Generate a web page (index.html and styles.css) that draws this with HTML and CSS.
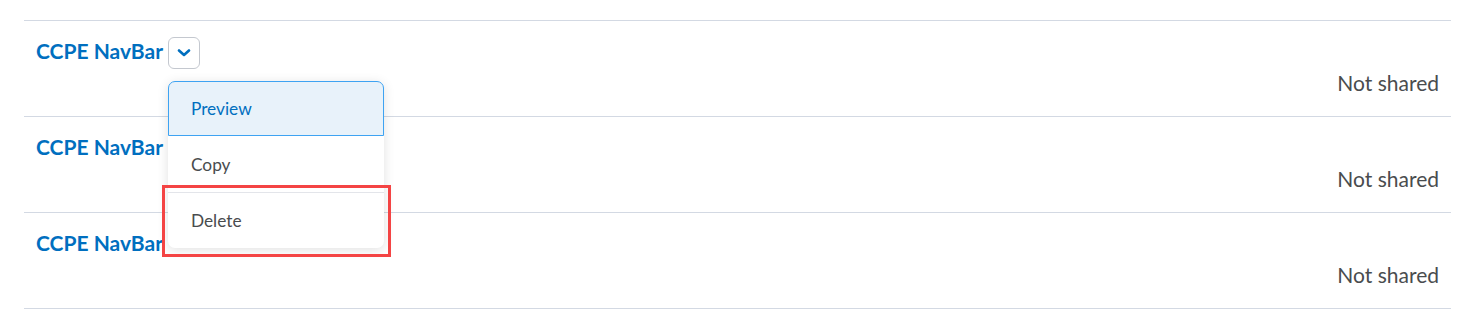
FILE: index.html
```html
<!DOCTYPE html>
<html lang="en">

<head>
    <meta charset="UTF-8">
    <meta name="viewport" content="width=device-width, initial-scale=1.0">
    <title>Widgets</title>
    <link rel="stylesheet" href="styles.css">
</head>

<body>
    <div class="list">
        <div class="row">
            <div class="row-head">
                <a class="title" href="#">CCPE NavBar</a>
                <div class="menu-wrap">
                    <button class="toggle" type="button">
                        <svg width="14" height="8" viewBox="0 0 14 8">
                            <path d="M2 1.5 L7 6 L12 1.5" fill="none" stroke="#006fbf" stroke-width="2.6" stroke-linecap="round" stroke-linejoin="round"/>
                        </svg>
                    </button>
                    <div class="menu">
                        <div class="menu-item active">Preview</div>
                        <div class="menu-item">Copy</div>
                        <div class="menu-item sep">Delete</div>
                        <div class="highlight"></div>
                    </div>
                </div>
            </div>
            <div class="status">Not shared</div>
        </div>
        <div class="row">
            <div class="row-head">
                <a class="title" href="#">CCPE NavBar</a>
            </div>
            <div class="status">Not shared</div>
        </div>
        <div class="row">
            <div class="row-head">
                <a class="title" href="#">CCPE NavBar</a>
            </div>
            <div class="status">Not shared</div>
        </div>
    </div>
</body>

</html>
```

FILE: styles.css
```css
body {
    margin: 0;
    padding: 20px 24px 0;
    background-color: #fff;
    font-family: Lato, 'Noto Sans', sans-serif;
    color: #494c4e;
}

.list {
    border-bottom: 1px solid #d3d9e3;
}

.row {
    border-top: 1px solid #d3d9e3;
    height: 96px;
    box-sizing: border-box;
    padding: 16px 12px 0;
}

.row-head {
    display: flex;
    align-items: center;
    height: 32px;
}

.title {
    font-size: 21px;
    font-weight: bold;
    color: #006fbf;
    text-decoration: none;
    margin-bottom: 6px;
}

.menu-wrap {
    position: relative;
    margin-left: 5px;
}

.toggle {
    display: flex;
    justify-content: center;
    align-items: center;
    width: 32px;
    height: 32px;
    padding: 0;
    border: 1px solid #c4c8cf;
    border-radius: 6px;
    background: #fff;
}

.status {
    text-align: right;
    font-size: 21px;
    line-height: 28px;
}

.menu {
    position: absolute;
    top: 44px;
    left: 0;
    width: 216px;
    background: #fff;
    border-radius: 7px;
    box-shadow: 0 2px 12px rgba(0, 0, 0, 0.12);
    z-index: 2;
}

.menu-item {
    height: 56px;
    box-sizing: border-box;
    padding-left: 23px;
    display: flex;
    align-items: center;
    font-size: 17.3px;
    color: #494c4e;
}

.menu-item.active {
    background: #e8f2fa;
    color: #006fbf;
    border: 1px solid #3ea3f2;
    border-radius: 7px 7px 0 0;
    padding-left: 22px;
    height: 55px;
}

.menu-item.sep {
    border-top: 1px solid #e3e5ea;
}

.highlight {
    position: absolute;
    left: -6px;
    top: 104px;
    width: 229px;
    height: 72px;
    box-sizing: border-box;
    border: 3px solid #f44444;
}
```
